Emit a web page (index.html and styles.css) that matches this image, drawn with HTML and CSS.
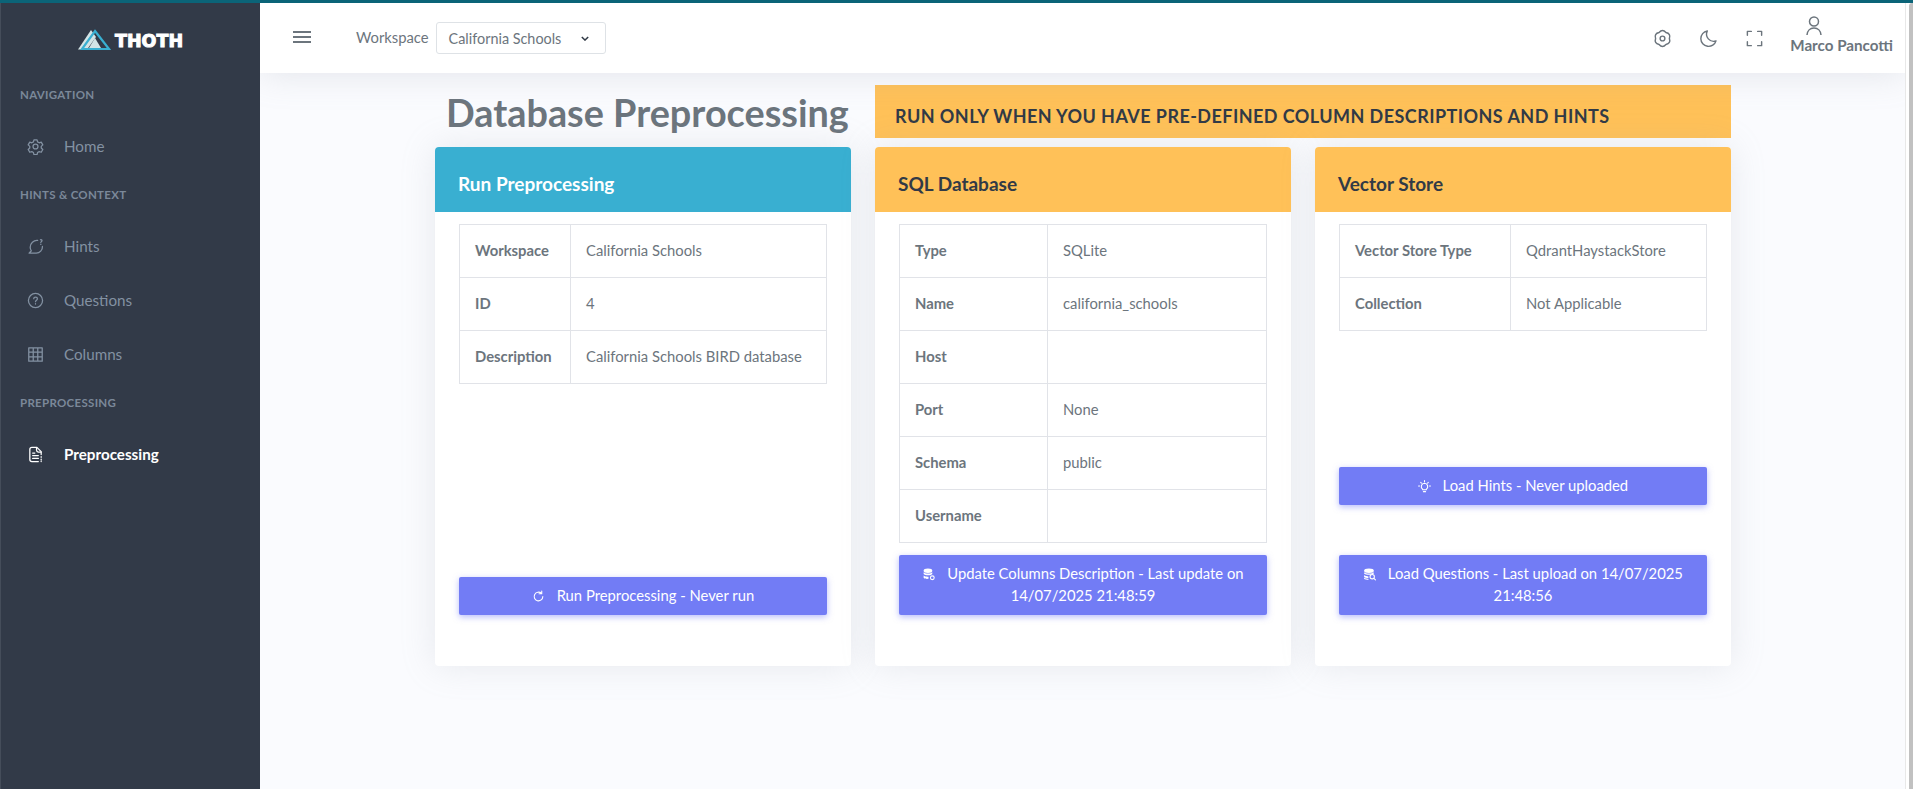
FILE: index.html
```html
<!DOCTYPE html>
<html>
<head>
    <meta charset="UTF-8">
    <title>Database Preprocessing</title>
    <link rel="stylesheet" href="styles.css">
</head>
<body>
    <div class="wrapper">
        <!-- sidebar -->
        <aside class="sidebar">
            <div class="logo">
                <svg width="33" height="21" viewBox="0 0 33 21">
                    <path d="M0 20.500L13 1 18 8 9 20.500Z" fill="#d3e4e6"/>
                    <path d="M17 2L31 20H4Z" fill="none" stroke="#39afd1" stroke-width="2.200"/>
                    <path d="M17 9L23 19H11Z" fill="#d3e4e6"/>
                </svg>
                <span class="logo-text">THOTH</span>
            </div>
            <div class="side-title side-title-first">NAVIGATION</div>
            <a class="side-item">
                <svg class="side-icon" viewBox="0 0 24 24"><circle cx="12" cy="12" r="3.500"/><path d="M9.800 2.500h4.400l.7 3 2.300 1.300 2.900-.9 2.200 3.800-2.200 2.100v2.400l2.200 2.100-2.200 3.800-2.900-.9-2.300 1.300-.7 3H9.800l-.7-3-2.300-1.300-2.900.9-2.200-3.800 2.200-2.100v-2.400L1.700 9.700l2.200-3.800 2.900.9 2.300-1.300z"/></svg>
                Home
            </a>
            <div class="side-title">HINTS &amp; CONTEXT</div>
            <a class="side-item">
                <svg class="side-icon" viewBox="0 0 24 24"><path d="M15 3.500A9.500 9.500 0 0 0 4.500 13c0 2 .6 3.600 1.600 5L3 21.500h10a9 9 0 0 0 8.800-9.500"/><path d="M19 2.500c1.500-.6 2.800.9 1.800 2.100-.5.600-1.300.9-1.300 1.700M19.500 8.500v.5"/></svg>
                Hints
            </a>
            <a class="side-item">
                <svg class="side-icon" viewBox="0 0 24 24"><circle cx="12" cy="12" r="10"/><path d="M9.500 9.500c0-3.200 5.200-3.200 5.200 0 0 2-2.700 2-2.700 4.200M12 16.500v.5"/></svg>
                Questions
            </a>
            <a class="side-item">
                <svg class="side-icon" viewBox="0 0 24 24"><path d="M2.500 2.500h19v19h-19zM2.500 8.800h19M2.500 15.200h19M8.800 2.500v19M15.200 2.500v19"/></svg>
                Columns
            </a>
            <div class="side-title">PREPROCESSING</div>
            <a class="side-item side-item-active">
                <svg class="side-icon" viewBox="0 0 24 24"><path d="M20 12V8l-6-6H7a3 3 0 0 0-3 3v14a3 3 0 0 0 3 3h9"/><path d="M13.500 2.500V6a2.500 2.500 0 0 0 2.500 2.500h4M8 10h3M8 13.500h8M8 17.500h8M20 15v1M20 18.500v1M20 21.500v.5"/></svg>
                Preprocessing
            </a>
        </aside>

        <div class="content">
            <!-- topbar -->
            <header class="topbar">
                <svg class="menu-icon" width="20" height="14" viewBox="0 0 20 14"><path d="M1 2h18M1 7h18M1 12h18"/></svg>
                <span class="ws-label">Workspace</span>
                <div class="ws-select">
                    California Schools
                    <svg width="8" height="5" viewBox="0 0 10 6"><path d="M1 1l4 4 4-4"/></svg>
                </div>
                <div class="top-icons">
                    <svg class="top-icon" viewBox="0 0 24 24"><circle cx="12" cy="12" r="3"/><path d="M7.650 4.470Q12 -.5 16.350 4.470 22.800 5.750 20.700 12 22.800 18.250 16.350 19.530 12 24.500 7.650 19.530 1.200 18.250 3.300 12 1.200 5.750 7.650 4.470Z"/></svg>
                    <svg class="top-icon" viewBox="0 0 24 24"><path d="M10.500 2.500a9.800 9.800 0 1 0 11 12.500A9 9 0 0 1 10.500 2.500z"/></svg>
                    <svg class="top-icon" viewBox="0 0 24 24"><path d="M3 8V3h5M16 3h5v5M21 16v5h-5M8 21H3v-5"/></svg>
                </div>
                <div class="user">
                    <svg width="16" height="20" viewBox="0 0 16 20"><circle cx="8" cy="5.500" r="4.500"/><path d="M1 19c.3-4 3-7 7-7s6.700 3 7 7"/></svg>
                    <span>Marco Pancotti</span>
                </div>
            </header>

            <main class="page">
                <div class="page-head">
                    <h1 class="page-title">Database Preprocessing</h1>
                    <div class="banner">RUN ONLY WHEN YOU HAVE PRE-DEFINED COLUMN DESCRIPTIONS AND HINTS</div>
                </div>
                <div class="cards">
                    <section class="card">
                        <h2 class="card-head head-info">Run Preprocessing</h2>
                        <div class="card-body">
                            <table class="info">
                                <tr><th>Workspace</th><td>California Schools</td></tr>
                                <tr><th>ID</th><td>4</td></tr>
                                <tr><th>Description</th><td>California Schools BIRD database</td></tr>
                            </table>
                            <div class="actions">
                                <a class="btn">
                                    <svg class="btn-icon" viewBox="0 0 24 24"><path d="M20 12a8 8 0 1 1-2.500-5.800M18 2v5h-5"/></svg>
                                    Run Preprocessing - Never run
                                </a>
                            </div>
                        </div>
                    </section>
                    <section class="card">
                        <h2 class="card-head head-warn">SQL Database</h2>
                        <div class="card-body">
                            <table class="info info-db">
                                <tr><th>Type</th><td>SQLite</td></tr>
                                <tr><th>Name</th><td>california_schools</td></tr>
                                <tr><th>Host</th><td></td></tr>
                                <tr><th>Port</th><td>None</td></tr>
                                <tr><th>Schema</th><td>public</td></tr>
                                <tr><th>Username</th><td></td></tr>
                            </table>
                            <div class="actions">
                                <a class="btn">
                                    <svg class="btn-icon btn-icon-solid" viewBox="0 0 24 24"><ellipse cx="11" cy="5" rx="8" ry="4"/><path d="M3 8c2 3 14 3 16 0v3c-2 3-14 3-16 0zM3 14c2 2 7 2.500 9 2v4c-3 .5-8 0-9-2z"/><circle cx="19" cy="18" r="3.500" fill="none" stroke="#fff" stroke-width="2"/></svg>
                                    Update Columns Description - Last update on 14/07/2025 21:48:59
                                </a>
                            </div>
                        </div>
                    </section>
                    <section class="card">
                        <h2 class="card-head head-warn">Vector Store</h2>
                        <div class="card-body">
                            <table class="info info-store">
                                <tr><th>Vector Store Type</th><td>QdrantHaystackStore</td></tr>
                                <tr><th>Collection</th><td>Not Applicable</td></tr>
                            </table>
                            <div class="actions actions-stack">
                                <a class="btn">
                                    <svg class="btn-icon" viewBox="0 0 24 24"><path d="M12 6a6 6 0 0 0-3.500 10.800V18h7v-1.200A6 6 0 0 0 12 6zM10 21.500h4M12 1v2M3 11H1M23 11h-2M5 4.500l1.300 1.300M19 4.500l-1.300 1.300"/></svg>
                                    Load Hints - Never uploaded
                                </a>
                                <a class="btn">
                                    <svg class="btn-icon btn-icon-solid" viewBox="0 0 24 24"><ellipse cx="11" cy="5" rx="9" ry="4"/><path d="M2 8c2 3 16 3 18 0v2c-2 3-16 3-18 0zM2 13c2 2 6 2.500 8 2.500v3c-3 0-7-.5-8-2.500zM2 18c2 1.500 6 2 8 2v2c-3 0-7-.5-8-2z"/><circle cx="17" cy="16" r="4" fill="none" stroke="#fff" stroke-width="2"/><path d="M20 19l3 3" stroke="#fff" stroke-width="2"/></svg>
                                    Load Questions - Last upload on 14/07/2025 21:48:56
                                </a>
                            </div>
                        </div>
                    </section>
                </div>
            </main>
        </div>

        <!-- scrollbar strip -->
        <div class="scroll-track"><div class="scroll-thumb"></div></div>
    </div>
</body>
</html>
```

FILE: styles.css
```css
html,body{margin: 0;padding: 0;height: 100%;}
body{
    font-family: "Lato","Noto Sans",sans-serif;
    font-size: 14.800px;color: #6c757d;
    background: #fafbfe;overflow: hidden;
}
h1,h2{margin: 0;}

.wrapper{
    display: flex;height: 100%;
    box-sizing: border-box;
    border-top: 3px solid #0b6478;
}

/* sidebar */
.sidebar{
    width: 260px;flex: none;
    background: #323a48;color: #8391a2;
    box-sizing: border-box;
    border-left: 1px solid #454d5a;
}
.logo{
    display: flex;align-items: flex-end;
    height: 47px;padding-left: 77px;
    gap: 4px;
}
.logo-text{
    font-family: "DejaVu Sans",sans-serif;
    font-weight: 700;font-size: 17.500px;line-height: 17px;
    color: #fff;-webkit-text-stroke: 1px #fff;
}
.side-title{
    font-size: 11.500px;font-weight: 700;letter-spacing: .3px;
    color: #7b8899;
    height: 15px;line-height: 15px;
    padding-left: 19px;margin-top: 14px;
}
.side-title-first{margin-top: 37px;}
.side-item{
    display: flex;align-items: center;
    height: 54px;padding-left: 26px;
    font-size: 15.200px;
}
.side-title + .side-item{margin-top: 17px;}
.side-icon{
    width: 17px;height: 17px;margin-right: 20px;flex: none;
    fill: none;stroke: currentColor;stroke-width: 1.800;
    stroke-linecap: round;stroke-linejoin: round;
}
.side-item-active{color: #fff;font-weight: 700;}

/* topbar */
.content{flex: 1;min-width: 0;display: flex;flex-direction: column;overflow: hidden;}
.topbar{
    height: 70px;flex: none;background: #fff;
    display: flex;align-items: center;
    box-shadow: 0 0 35px rgba(154,161,171,.25);
    position: relative;
    padding-right: 12px;
}
.menu-icon{
    margin-left: 32px;margin-top: -2px;
    fill: none;stroke: #6c757d;stroke-width: 2;
}
.ws-label{margin-left: 44px;margin-top: -3px;}
.ws-select{
    display: flex;align-items: center;justify-content: space-between;
    width: 170px;height: 32px;margin-left: 7px;
    box-sizing: border-box;padding: 0 16px 0 12px;
    border: 1px solid #dee2e6;border-radius: 3px;
    font-size: 14.400px;
}
.ws-select svg{fill: none;stroke: #313a46;stroke-width: 1.800;}
.top-icons{display: flex;gap: 27px;margin-left: auto;}
.top-icon{
    width: 19px;height: 19px;
    fill: none;stroke: #6c757d;stroke-width: 1.800;
    stroke-linejoin: round;stroke-linecap: round;
}
.user{
    display: flex;flex-direction: column;align-items: flex-start;
    margin-left: 26px;margin-top: -6px;
    font-weight: 700;font-size: 15.200px;line-height: 18px;
}
.user svg{
    margin-left: 16px;
    fill: none;stroke: #6c757d;stroke-width: 1.500;
}

/* page */
.page{
    flex: 1;
    padding: 12px 174px 0 175px;
}
.page-head{display: grid;grid-template-columns: 416px 1fr;column-gap: 24px;}
.page-title{
    font-size: 37.800px;font-weight: 700;line-height: 51px;
    color: #6c757d;padding: 2px 0 0 11px;white-space: nowrap;
}
.banner{
    background: #ffc158;color: #313a46;
    height: 53px;box-sizing: border-box;
    padding: 20px 0 0 20px;
    font-size: 18px;font-weight: 700;line-height: 22px;
    letter-spacing: .44px;
}
.cards{
    display: grid;grid-template-columns: repeat(3,416px);column-gap: 24px;
    margin-top: 9px;
}
.card{
    height: 519px;display: flex;flex-direction: column;
    background: #fff;border-radius: 4px;
    box-shadow: 0 0 35px rgba(154,161,171,.2);
}
.card-head{
    height: 65px;flex: none;box-sizing: border-box;
    padding: 7px 23px 0;
    display: flex;align-items: center;
    font-size: 19px;font-weight: 700;
    border-radius: 4px 4px 0 0;
}
.head-info{background: #39afd1;color: #fff;}
.head-warn{background: #ffc158;color: #313a46;}
.card-body{
    flex: 1;display: flex;flex-direction: column;
    padding: 12px 24px 51px;
}
.info{width: 100%;border-collapse: collapse;table-layout: fixed;}
.info th,.info td{
    height: 53px;box-sizing: border-box;padding: 0 15px 2px;
    border: 1px solid #e1e3e8;
    text-align: left;
}
.info th{width: 111px;font-weight: 700;}
.info-db th{width: 148px;}
.info-store th{width: 171px;}

.actions{margin-top: auto;}
.actions-stack{display: flex;flex-direction: column;gap: 50px;}
.btn{
    display: block;box-sizing: border-box;
    padding: 7px 16px 9px;
    background: #727cf5;color: #fff;
    border-radius: 2px;
    text-align: center;line-height: 22px;
    box-shadow: 0 2px 6px 0 rgba(114,124,245,.5);
}
.btn-icon{
    width: 13px;height: 13px;margin: 0 8px -2px 0;
    fill: none;stroke: #fff;stroke-width: 2;stroke-linecap: round;stroke-linejoin: round;
}
.btn-icon-solid{fill: #fff;stroke: none;}

/* fake scrollbar */
.scroll-track{
    width: 8px;flex: none;box-sizing: border-box;
    background: #fff;border-left: 1px solid #e8e8e8;
    padding-left: 3px;
}
.scroll-thumb{height: 100%;background: #c1c1c1;border-radius: 3px 0 0 0;}
```
